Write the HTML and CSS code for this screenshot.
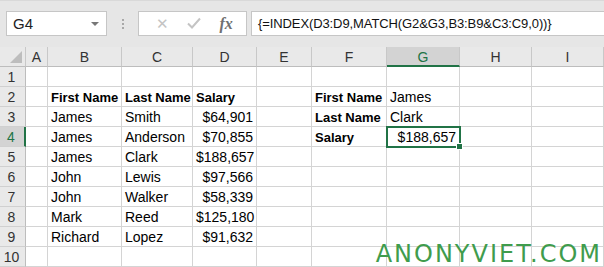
FILE: index.html
```html
<!DOCTYPE html>
<html lang="en">
<head>
    <meta charset="UTF-8">
    <title>index match two criteria</title>
    <link rel="stylesheet" href="styles.css">
</head>
<body>
    <div class="toolbar">
        <div class="namebox">
            <span>G4</span>
            <span class="caret"></span>
        </div>
        <div class="grip"><i></i><i></i><i></i></div>
        <div class="fx-buttons">
            <span class="fx-btn dim">&#x2715;</span>
            <span class="fx-btn dim">
                <svg width="14" height="12" viewBox="0 0 14 12"><path d="M1 6.5 L5 10.5 L13 1.5" fill="none" stroke="#c4c4c4" stroke-width="2"/></svg>
            </span>
            <span class="fx-btn fx">fx</span>
        </div>
        <div class="formula">{=INDEX(D3:D9,MATCH(G2&amp;G3,B3:B9&amp;C3:C9,0))}</div>
    </div>

    <div class="sheet">
        <!-- column headers -->
        <div class="hd corner"><span class="tri"></span></div>
        <div class="hd">A</div>
        <div class="hd">B</div>
        <div class="hd">C</div>
        <div class="hd">D</div>
        <div class="hd">E</div>
        <div class="hd">F</div>
        <div class="hd active-col">G</div>
        <div class="hd">H</div>
        <div class="hd">I</div>

        <!-- row 1 -->
        <div class="rh">1</div>
        <div class="c"></div><div class="c"></div><div class="c"></div><div class="c"></div><div class="c"></div><div class="c"></div><div class="c"></div><div class="c"></div><div class="c"></div>

        <!-- row 2 -->
        <div class="rh">2</div>
        <div class="c"></div>
        <div class="c b">First Name</div>
        <div class="c b">Last Name</div>
        <div class="c b">Salary</div>
        <div class="c"></div>
        <div class="c b">First Name</div>
        <div class="c">James</div>
        <div class="c"></div><div class="c"></div>

        <!-- row 3 -->
        <div class="rh">3</div>
        <div class="c"></div>
        <div class="c">James</div>
        <div class="c">Smith</div>
        <div class="c num">$64,901</div>
        <div class="c"></div>
        <div class="c b">Last Name</div>
        <div class="c">Clark</div>
        <div class="c"></div><div class="c"></div>

        <!-- row 4 -->
        <div class="rh active-row">4</div>
        <div class="c"></div>
        <div class="c">James</div>
        <div class="c">Anderson</div>
        <div class="c num">$70,855</div>
        <div class="c"></div>
        <div class="c b">Salary</div>
        <div class="c num selected">$188,657<span class="handle"></span></div>
        <div class="c"></div><div class="c"></div>

        <!-- row 5 -->
        <div class="rh">5</div>
        <div class="c"></div>
        <div class="c">James</div>
        <div class="c">Clark</div>
        <div class="c num">$188,657</div>
        <div class="c"></div><div class="c"></div><div class="c"></div><div class="c"></div><div class="c"></div>

        <!-- row 6 -->
        <div class="rh">6</div>
        <div class="c"></div>
        <div class="c">John</div>
        <div class="c">Lewis</div>
        <div class="c num">$97,566</div>
        <div class="c"></div><div class="c"></div><div class="c"></div><div class="c"></div><div class="c"></div>

        <!-- row 7 -->
        <div class="rh">7</div>
        <div class="c"></div>
        <div class="c">John</div>
        <div class="c">Walker</div>
        <div class="c num">$58,339</div>
        <div class="c"></div><div class="c"></div><div class="c"></div><div class="c"></div><div class="c"></div>

        <!-- row 8 -->
        <div class="rh">8</div>
        <div class="c"></div>
        <div class="c">Mark</div>
        <div class="c">Reed</div>
        <div class="c num">$125,180</div>
        <div class="c"></div><div class="c"></div><div class="c"></div><div class="c"></div><div class="c"></div>

        <!-- row 9 -->
        <div class="rh">9</div>
        <div class="c"></div>
        <div class="c">Richard</div>
        <div class="c">Lopez</div>
        <div class="c num">$91,632</div>
        <div class="c"></div><div class="c"></div><div class="c"></div><div class="c"></div><div class="c"></div>

        <!-- row 10 -->
        <div class="rh">10</div>
        <div class="c"></div><div class="c"></div><div class="c"></div><div class="c"></div><div class="c"></div><div class="c"></div><div class="c"></div><div class="c"></div><div class="c"></div>
    </div>

    <div class="watermark">ANONYVIET.COM</div>
</body>
</html>
```

FILE: styles.css
```css
body {
    margin: 0;
    width: 604px;
    height: 267px;
    overflow: hidden;
    position: relative;
    font-family: "Liberation Sans", Arial, sans-serif;
    background: #fff;
    color: #000;
}
.toolbar {
    height: 47px;
    box-sizing: border-box;
    background: #e6e6e6;
    border-top: 1px solid #d9d9d9;
    display: flex;
    align-items: center;
    padding: 0 0 1px 6px;
}
.namebox {
    width: 101px;
    height: 25px;
    box-sizing: border-box;
    background: #fff;
    border: 1px solid #c6c6c6;
    display: flex;
    align-items: center;
    justify-content: space-between;
    padding: 0 7px 0 6px;
    font-size: 15px;
    color: #222;
}
.caret {
    width: 0;
    height: 0;
    border-left: 4px solid transparent;
    border-right: 4px solid transparent;
    border-top: 4px solid #777;
}
.grip {
    width: 2px;
    margin: 0 14px 0 15px;
    display: flex;
    flex-direction: column;
    gap: 2px;
}
.grip i {
    display: block;
    width: 2px;
    height: 2px;
    background: #a8a8a8;
}
.fx-buttons {
    width: 109px;
    height: 25px;
    box-sizing: border-box;
    background: #fff;
    border: 1px solid #c6c6c6;
    display: flex;
    align-items: center;
    justify-content: space-around;
    padding: 0 4px 0 8px;
}
.fx-btn {
    width: 24px;
    text-align: center;
    font-size: 15px;
    line-height: 1;
}
.dim {
    color: #c4c4c4;
}
.fx {
    font-family: "Liberation Serif", serif;
    font-style: italic;
    font-weight: bold;
    color: #707070;
    font-size: 16px;
}
.formula {
    flex: 1;
    margin-left: 4px;
    margin-right: -4px;
    height: 25px;
    box-sizing: border-box;
    background: #fff;
    border: 1px solid #c6c6c6;
    display: flex;
    align-items: center;
    padding-left: 6px;
    font-size: 13px;
    letter-spacing: -0.1px;
    color: #111;
    white-space: nowrap;
}
.sheet {
    display: grid;
    grid-template-columns: 26px 22px 74px 71px 64px 55px 75px 73px 72px 1fr;
    grid-template-rows: 20px;
    grid-auto-rows: 20px;
    font-size: 14px;
}
.hd {
    background: #e9e9e9;
    border-right: 1px solid #c8c8c8;
    border-bottom: 1px solid #bdbdbd;
    box-sizing: border-box;
    text-align: center;
    line-height: 20px;
    color: #333;
}
.corner {
    position: relative;
}
.tri {
    position: absolute;
    right: 3px;
    bottom: 3px;
    width: 0;
    height: 0;
    border-left: 12px solid transparent;
    border-bottom: 12px solid #bdbdbd;
}
.active-col {
    background: #d3d3d3;
    border-bottom: 2px solid #217346;
    color: #217346;
}
.rh {
    background: #e9e9e9;
    border-right: 1px solid #bdbdbd;
    border-bottom: 1px solid #d0d0d0;
    box-sizing: border-box;
    text-align: center;
    line-height: 20px;
    color: #333;
    padding-right: 2px;
}
.active-row {
    background: #d3d3d3;
    border-right: 2px solid #217346;
    color: #217346;
}
.c {
    border-right: 1px solid #d4d4d4;
    border-bottom: 1px solid #d4d4d4;
    box-sizing: border-box;
    padding: 1px 3px 0;
    line-height: 19px;
    white-space: nowrap;
    overflow: visible;
}
.b {
    font-weight: bold;
    font-size: 13px;
}
.num {
    text-align: right;
}
.selected {
    position: relative;
    outline: 2px solid #217346;
    outline-offset: -1px;
}
.handle {
    position: absolute;
    right: -4px;
    bottom: -4px;
    width: 5px;
    height: 5px;
    background: #217346;
    border: 1px solid #fff;
}
.watermark {
    position: absolute;
    right: 2px;
    bottom: 1px;
    font-family: "DejaVu Sans", sans-serif;
    font-size: 24px;
    line-height: 24px;
    letter-spacing: 2px;
    color: #3f9c4d;
}
```
